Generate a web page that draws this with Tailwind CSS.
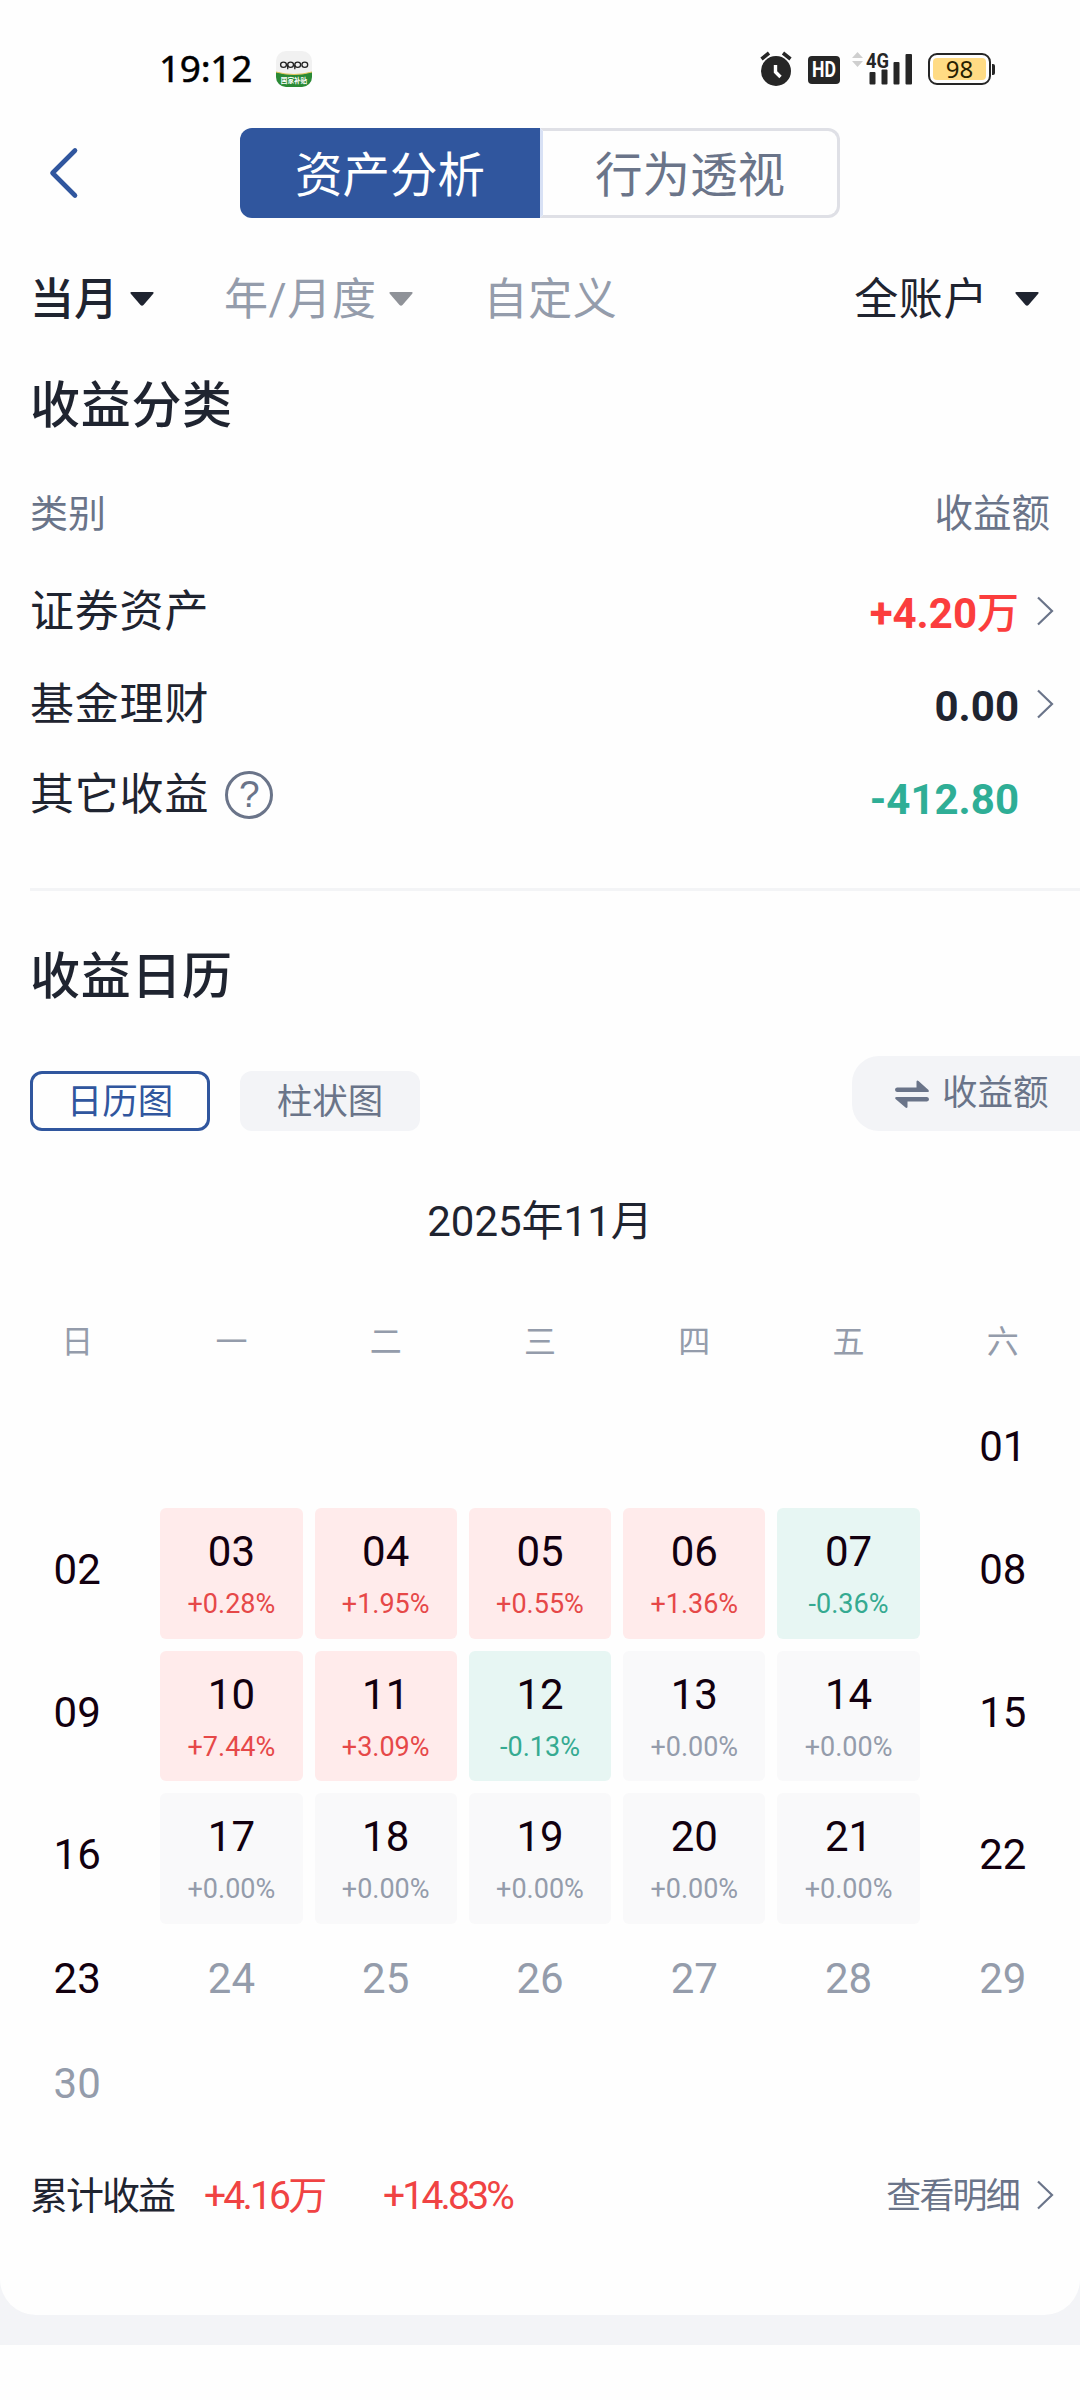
<!DOCTYPE html>
<html lang="zh-CN">
<head>
  <meta charset="UTF-8">
  <meta name="viewport" content="width=device-width, initial-scale=1.0">
  <title>资产分析</title>
  <script src="https://cdn.jsdelivr.net/npm/@tailwindcss/browser@4"></script>
</head>
<body class="bg-[#fefefe] font-['Roboto','Noto_Sans_CJK_SC',sans-serif] text-[#1f2430]">
  <div class="w-[1080px] h-[2400px] overflow-hidden">
    <div class="bg-[#f3f4f7] h-[2345px]">
      <div class="bg-[#fefefe] h-[2315px] rounded-b-[36px] flex flex-col">

        <!-- Status bar -->
        <div class="h-[104px] pt-[34px] pl-[159px] pr-[85px] flex items-center justify-between shrink-0">
          <div class="flex items-center">
            <span class="w-[117px] mb-[2px] font-['Noto_Sans',sans-serif] text-[37px] leading-[40px] tracking-[-0.300px] text-black [-webkit-text-stroke:0.5px_black]">19:12</span>
            <svg class="w-[36px] h-[36px]" viewBox="0 0 36 36">
              <defs><clipPath id="app"><rect width="36" height="36" rx="10" /></clipPath></defs>
              <g clip-path="url(#app)">
                <rect width="36" height="36" fill="#f1f1f1" />
                <path d="M0 21Q18 26 36 21V36H0Z" fill="#2a8a35" />
                <path d="M0 21Q18 26 36 21" fill="none" stroke="#e3c55a" stroke-width="1" />
              </g>
              <g fill="none" stroke="#222" stroke-width="1.300">
                <ellipse cx="7.500" cy="13.800" rx="2.900" ry="2.600" />
                <ellipse cx="14.600" cy="13.800" rx="2.900" ry="2.600" />
                <ellipse cx="21.700" cy="13.800" rx="2.900" ry="2.600" />
                <ellipse cx="28.800" cy="13.800" rx="2.900" ry="2.600" />
                <path d="M11.700 13.800v4.500M18.800 13.800v4.500" />
              </g>
              <text x="18" y="31.800" text-anchor="middle" font-size="6.600" font-weight="bold" fill="#fff" font-family="Noto Sans CJK SC, sans-serif">国家补贴</text>
            </svg>
          </div>
          <div class="flex items-center">
            <svg class="w-[32px] h-[36px] mr-[16px]" viewBox="0 0 32 36">
              <circle cx="16" cy="20" r="15" fill="#262626" />
              <path d="M1.500 8L9 2M30.500 8L23 2" stroke="#262626" stroke-width="3.600" />
              <path d="M15.500 14v7l5 5" fill="none" stroke="#fff" stroke-width="3.400" />
            </svg>
            <div class="w-[32px] h-[28px] mt-[2px] mr-[12px] rounded-[4px] bg-[#262626] text-white flex items-center justify-center">
              <span class="text-[22px] leading-[28px] font-bold scale-x-[0.8]">HD</span>
            </div>
            <svg class="w-[62px] h-[36px] mr-[14px] overflow-visible" viewBox="0 0 62 36">
              <path d="M0 7L5.500 1L11 7ZM0 10L5.500 16L11 10Z" fill="#cfcfcf" />
              <text x="14" y="16.500" font-size="20.500" font-weight="bold" fill="#262626" textLength="23" lengthAdjust="spacingAndGlyphs" font-family="Roboto, sans-serif">4G</text>
              <g fill="#262626">
                <rect x="17.500" y="21" width="6" height="12.500" rx="1" />
                <rect x="29.500" y="18.500" width="6" height="15" rx="1" />
                <rect x="41.500" y="11" width="6" height="22.500" rx="1" />
                <rect x="53.500" y="3" width="6.500" height="30.500" rx="1" />
              </g>
            </svg>
            <div class="flex items-center">
              <div class="w-[63px] h-[32px] border-[2.500px] border-[#262626] rounded-[9px] p-[3px]">
                <div class="h-full rounded-[4px] bg-[#ffdb84] flex items-center justify-center text-[24px] leading-[24px] text-[#262000] font-['Noto_Sans',sans-serif]">98</div>
              </div>
              <div class="w-[3px] h-[11px] ml-px rounded-r-[2px] bg-[#262626]"></div>
            </div>
          </div>
        </div>

        <!-- Header with segmented tabs -->
        <div class="h-[138px] flex items-center shrink-0">
          <svg class="w-[30px] h-[52px] ml-[49px] mr-[161px]" viewBox="0 0 30 52" fill="none" stroke="#30569e" stroke-width="4.600" stroke-linecap="round" stroke-linejoin="round">
            <path d="M26 3.500L3.500 26L26 48.500" />
          </svg>
          <div class="w-[600px] h-[90px] flex text-[47.500px] leading-[48px]">
            <div class="w-[300px] pt-[5px] rounded-l-[12px] bg-[#30569e] text-white flex items-center justify-center">资产分析</div>
            <div class="w-[300px] pt-[5px] rounded-r-[12px] border-[3px] border-[#dfe0e6] border-l-[#d8e1f5] text-[#6a7489] flex items-center justify-center">行为透视</div>
          </div>
        </div>

        <!-- Filters -->
        <div class="h-[112px] pl-[30px] pr-[41px] flex items-center shrink-0 text-[44px] leading-[44px]">
          <span class="mt-[4px] font-medium">当月</span>
          <svg class="w-[24px] h-[14px] mt-[2px] ml-[12px]" viewBox="0 0 24 14"><path d="M1.500 0h21q2 0 .5 2L13.500 13q-1.500 1.500-3 0L1 2Q-.5 0 1.500 0Z" fill="#1f2430" /></svg>
          <span class="mt-[4px] ml-[70px] text-[#949cab] tracking-[0.600px]">年/月度</span>
          <svg class="w-[24px] h-[14px] mt-[2px] ml-[12px]" viewBox="0 0 24 14"><path d="M1.500 0h21q2 0 .5 2L13.500 13q-1.500 1.500-3 0L1 2Q-.5 0 1.500 0Z" fill="#8f9298" /></svg>
          <span class="mt-[4px] ml-[71px] text-[#949cab] tracking-[0.600px]">自定义</span>
          <span class="mt-[4px] ml-auto tracking-[0.600px]">全账户</span>
          <svg class="w-[24px] h-[14px] mt-[2px] ml-[27px]" viewBox="0 0 24 14"><path d="M1.500 0h21q2 0 .5 2L13.500 13q-1.500 1.500-3 0L1 2Q-.5 0 1.500 0Z" fill="#1f2430" /></svg>
        </div>

        <!-- Income by category -->
        <h2 class="h-[100px] pt-[4px] pl-[30px] flex items-center shrink-0 text-[50px] tracking-[0.700px] font-medium">收益分类</h2>
        <div class="h-[113px] pl-[30px] pr-[30px] pt-[7px] flex items-center justify-between shrink-0 text-[38px] text-[#6a7489]">
          <span>类别</span>
          <span class="text-[38.500px]">收益额</span>
        </div>
        <div class="h-[93px] pl-[30px] pr-[26px] flex items-center shrink-0">
          <span class="mb-[4px] text-[44px] leading-[44px] tracking-[0.800px]">证券资产</span>
          <span class="ml-auto text-[42px] leading-[42px] font-bold text-[#fb3d3d]">+4.20<span class="font-medium">万</span></span>
          <svg class="w-[18px] h-[30px] ml-[17px] mb-[5px]" viewBox="0 0 18 30" fill="none" stroke="#6a7489" stroke-width="2.200"><path d="M2 1.500L16 15L2 28.500" /></svg>
        </div>
        <div class="h-[93px] pl-[30px] pr-[26px] flex items-center shrink-0">
          <span class="text-[44px] leading-[44px] tracking-[0.800px] mb-[4px]">基金理财</span>
          <span class="ml-auto text-[42px] leading-[42px] font-bold">0.00</span>
          <svg class="w-[18px] h-[30px] ml-[17px] mb-[5px]" viewBox="0 0 18 30" fill="none" stroke="#6a7489" stroke-width="2.200"><path d="M2 1.500L16 15L2 28.500" /></svg>
        </div>
        <div class="h-[93px] pl-[30px] pr-[61px] flex items-center shrink-0">
          <span class="text-[44px] leading-[44px] tracking-[0.800px] mb-[10px]">其它收益</span>
          <div class="w-[48px] h-[48px] ml-[16px] mb-[9px] rounded-full border-[3px] border-[#6a7489] text-[#6a7489] flex items-center justify-center text-[37px] leading-[42px] font-['Liberation_Sans',sans-serif]">?</div>
          <span class="ml-auto text-[42px] leading-[42px] font-bold text-[#2fae96]">-412.80</span>
        </div>
        <div class="h-[3px] mt-[42px] ml-[30px] bg-[#f3f4f6] shrink-0"></div>

        <!-- Income calendar -->
        <h2 class="h-[165px] pt-[8px] pl-[30px] flex items-center shrink-0 text-[50px] tracking-[0.700px] font-medium">收益日历</h2>
        <div class="h-[75px] pl-[30px] flex items-end shrink-0 text-[35.500px] leading-[36px]">
          <div class="w-[180px] h-[60px] pt-[2px] rounded-[12px] border-[3px] border-[#30569e] text-[#30569e] flex items-center justify-center">日历图</div>
          <div class="w-[180px] h-[60px] pt-[2px] ml-[30px] rounded-[12px] bg-[#f3f4f7] text-[#6a7489] flex items-center justify-center">柱状图</div>
          <div class="w-[228px] h-[75px] ml-auto rounded-l-[27px] bg-[#f3f4f7] text-[#6a7489] flex items-center pl-[42px]">
            <svg class="w-[36px] h-[30px] mr-[12px]" viewBox="0 0 36 30" fill="#6a7489">
              <path d="M3 8.500H22.500V2.500Q23 1 24.500 2L34.500 11Q35.500 13 33.500 13H3Q1 12.500 1 10.700Q1 9 3 8.500Z" />
              <path d="M33 22.500H13.500V28Q13 29.500 11.500 28.500L1.500 20Q.5 18 2.500 18H33Q35 18.500 35 20.200Q35 22 33 22.500Z" />
            </svg>
            <span class="mb-[2px]">收益额</span>
          </div>
        </div>
        <div class="h-[180px] pt-px flex items-center justify-center shrink-0 text-[42px]">2025年11月</div>
        <div class="h-[86px] pb-[24px] grid grid-cols-7 items-center text-center shrink-0 text-[32px] leading-[32px] text-[#949cab]">
          <span>日</span><span>一</span><span>二</span><span>三</span><span>四</span><span>五</span><span>六</span>
        </div>
        <div id="calendar" class="grid grid-cols-7 grid-rows-[105px_142.500px_142.500px_142.500px_105px_105px] shrink-0 text-[42px] leading-[42px] text-center text-[#12000f]"></div>

        <!-- Totals -->
        <div class="h-[113px] pl-[30px] pr-[26px] flex items-center shrink-0 text-[38px] leading-[38px] tracking-[-2px]">
          <span class="w-[174px]">累计收益</span>
          <span class="w-[179px] text-[39px] tracking-[-2.800px] text-[#f04343]">+4.16万</span>
          <span class="text-[39px] tracking-[-2.800px] text-[#f04343]">+14.83%</span>
          <span class="ml-auto mt-[2px] text-[35px] tracking-[-1.800px] text-[#6a7489]">查看明细</span>
          <svg class="w-[18px] h-[30px] ml-[17px] mb-[2px]" viewBox="0 0 18 30" fill="none" stroke="#6a7489" stroke-width="2.200"><path d="M2 1.500L16 15L2 28.500" /></svg>
        </div>
      </div>
    </div>
  </div>

  <script>
    // Daily return by day of month; days not listed have no trading data
    const returns = {
      3: "+0.28%", 4: "+1.95%", 5: "+0.55%", 6: "+1.36%", 7: "-0.36%",
      10: "+7.44%", 11: "+3.09%", 12: "-0.13%", 13: "+0.00%", 14: "+0.00%",
      17: "+0.00%", 18: "+0.00%", 19: "+0.00%", 20: "+0.00%", 21: "+0.00%",
    };
    const firstWeekday = 6; // Saturday
    const daysInMonth = 30;
    const lastActiveDay = 23;

    const calendar = document.getElementById("calendar");
    let html = "<div></div>".repeat(firstWeekday);

    for (let day = 1; day <= daysInMonth; day++) {
      const label = String(day).padStart(2, "0");
      const value = returns[day];
      if (value) {
        let box = "bg-[#ffebeb]";
        let text = "text-[#e64848]";
        if (value === "+0.00%") {
          box = "bg-[#f9f9fa]";
          text = "text-[#949cab]";
        } else if (value.startsWith("-")) {
          box = "bg-[#e7f6f3]";
          text = "text-[#35aa91]";
        }
        html += `
          <div class="m-[6px] pt-[23px] rounded-[6px] ${box}">
            <div>${label}</div>
            <div class="mt-[18px] text-[27px] leading-[27px] ${text}">${value}</div>
          </div>`;
      } else {
        const color = day > lastActiveDay ? "text-[#949cab]" : "";
        html += `<div class="flex items-center justify-center pb-[6px] ${color}">${label}</div>`;
      }
    }
    calendar.innerHTML = html;
  </script>
</body>
</html>
